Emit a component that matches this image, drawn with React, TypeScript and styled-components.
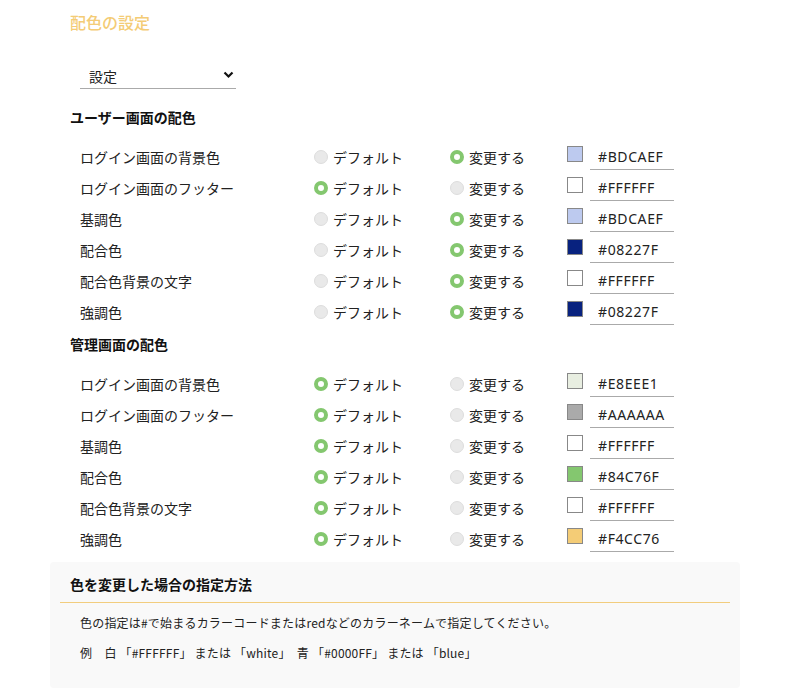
import React, { ReactElement, useState } from 'react';
import styled, { createGlobalStyle } from 'styled-components';

const GlobalStyle = createGlobalStyle`
  body {
    margin: 0;
    background: #ffffff;
    font-family: "Noto Sans CJK JP", "Noto Sans", sans-serif;
    color: #222222;
  }
`;

const Page = styled.div`
  width: 799px;
  padding: 10px 0 0 70px;
  box-sizing: border-box;
`;

const Title = styled.h1`
  margin: 0;
  font-size: 16px;
  font-weight: 500;
  line-height: 24px;
  color: #f4cc76;
`;

const SelectWrap = styled.div`
  position: relative;
  width: 156px;
  margin: 29px 0 0 10px;
`;

const Select = styled.select`
  appearance: none;
  width: 100%;
  height: 25px;
  padding: 0 0 0 9px;
  border: none;
  border-bottom: 1px solid #aaaaaa;
  background: transparent;
  font-family: inherit;
  font-size: 14px;
  color: #222222;
  outline: none;
`;

const Chevron = styled.svg`
  position: absolute;
  right: 2px;
  top: 8px;
  pointer-events: none;
`;

const SectionTitle = styled.h2`
  margin: 0;
  font-size: 14px;
  font-weight: 700;
  line-height: 20px;
  color: #111111;
  margin-top: ${(p: { $top: number }) => p.$top}px;
`;

const Rows = styled.div`
  display: flex;
  flex-direction: column;
  margin: 14px 0 0 10px;
`;

const Row = styled.div`
  display: grid;
  grid-template-columns: 234px 136px 117px 23px 84px;
  align-items: center;
  height: 31px;
  font-size: 14px;
`;

const Label = styled.span`
  color: #222222;
`;

const RadioLabel = styled.label`
  display: flex;
  align-items: center;
  gap: 5px;
  cursor: pointer;
  color: #222222;
`;

const RadioDot = styled.span<{ $on: boolean }>`
  width: 14px;
  height: 14px;
  border-radius: 50%;
  box-sizing: border-box;
  background: ${(p) => (p.$on ? '#ffffff' : '#e9e9e9')};
  border: ${(p) => (p.$on ? '4px solid #84c76f' : '1px solid #dddddd')};
`;

const Swatch = styled.span<{ $color: string }>`
  width: 16px;
  height: 16px;
  box-sizing: border-box;
  border: 1px solid #888888;
  background: ${(p) => p.$color};
  margin-top: -6px;
`;

const ColorInput = styled.input`
  width: 84px;
  height: 27px;
  box-sizing: border-box;
  padding: 1px 0 0 8px;
  border: none;
  border-bottom: 1px solid #aaaaaa;
  font-family: "Noto Sans", "Noto Sans CJK JP", sans-serif;
  font-size: 14px;
  letter-spacing: 0.6px;
  color: #222222;
  background: transparent;
  outline: none;
`;

const InfoBox = styled.div`
  width: 690px;
  margin: 8px 0 14px -20px;
  padding: 12px 10px 26px;
  box-sizing: border-box;
  background: #f9f9f9;
  border-radius: 4px;
`;

const InfoTitle = styled.h3`
  margin: 0;
  padding: 0 10px 8px;
  font-size: 14px;
  font-weight: 700;
  line-height: 20px;
  color: #111111;
  border-bottom: 1px solid #f2cd7e;
`;

const InfoText = styled.p`
  margin: ${(p: { $top: number }) => p.$top}px 0 0 20px;
  font-size: 12px;
  line-height: 18px;
  letter-spacing: 0.2px;
  color: #222222;
  white-space: pre;
`;

type ColorRow = { name: string; custom: boolean; value: string };

const userRows: ColorRow[] = [
  { name: 'ログイン画面の背景色', custom: true, value: '#BDCAEF' },
  { name: 'ログイン画面のフッター', custom: false, value: '#FFFFFF' },
  { name: '基調色', custom: true, value: '#BDCAEF' },
  { name: '配合色', custom: true, value: '#08227F' },
  { name: '配合色背景の文字', custom: true, value: '#FFFFFF' },
  { name: '強調色', custom: true, value: '#08227F' },
];

const adminRows: ColorRow[] = [
  { name: 'ログイン画面の背景色', custom: false, value: '#E8EEE1' },
  { name: 'ログイン画面のフッター', custom: false, value: '#AAAAAA' },
  { name: '基調色', custom: false, value: '#FFFFFF' },
  { name: '配合色', custom: false, value: '#84C76F' },
  { name: '配合色背景の文字', custom: false, value: '#FFFFFF' },
  { name: '強調色', custom: false, value: '#F4CC76' },
];

const ColorRows = ({ rows, group }: { rows: ColorRow[]; group: string }): ReactElement => {
  const [state, setState] = useState(rows);

  const update = (i: number, patch: Partial<ColorRow>) => {
    setState((s) => s.map((r, j) => (j === i ? { ...r, ...patch } : r)));
  };

  return (
    <Rows>
      {state.map((r, i) => (
        <Row key={group + i}>
          <Label>{r.name}</Label>
          <RadioLabel onClick={() => update(i, { custom: false })}>
            <RadioDot $on={!r.custom} />
            デフォルト
          </RadioLabel>
          <RadioLabel onClick={() => update(i, { custom: true })}>
            <RadioDot $on={r.custom} />
            変更する
          </RadioLabel>
          <Swatch $color={r.value} />
          <ColorInput value={r.value} onChange={(e) => update(i, { value: e.target.value })} />
        </Row>
      ))}
    </Rows>
  );
};

const App = (): ReactElement => {
  return (
    <>
      <GlobalStyle />
      <Page>
        <Title>配色の設定</Title>
        <SelectWrap>
          <Select defaultValue="settings">
            <option value="settings">設定</option>
          </Select>
          <Chevron width="11" height="8" viewBox="0 0 11 8">
            <path d="M1.5 1.5 L5.5 5.5 L9.5 1.5" fill="none" stroke="#111" strokeWidth="2.2" />
          </Chevron>
        </SelectWrap>
        <SectionTitle $top={18}>ユーザー画面の配色</SectionTitle>
        <ColorRows rows={userRows} group="user" />
        <SectionTitle $top={7}>管理画面の配色</SectionTitle>
        <ColorRows rows={adminRows} group="admin" />
        <InfoBox>
          <InfoTitle>色を変更した場合の指定方法</InfoTitle>
          <InfoText $top={11}>
            色の指定は#で始まるカラーコードまたはredなどのカラーネームで指定してください。
          </InfoText>
          <InfoText $top={12}>{'例　白 「#FFFFFF」 または 「white」　青 「#0000FF」 または 「blue」'}</InfoText>
        </InfoBox>
      </Page>
    </>
  );
};

export default App;
